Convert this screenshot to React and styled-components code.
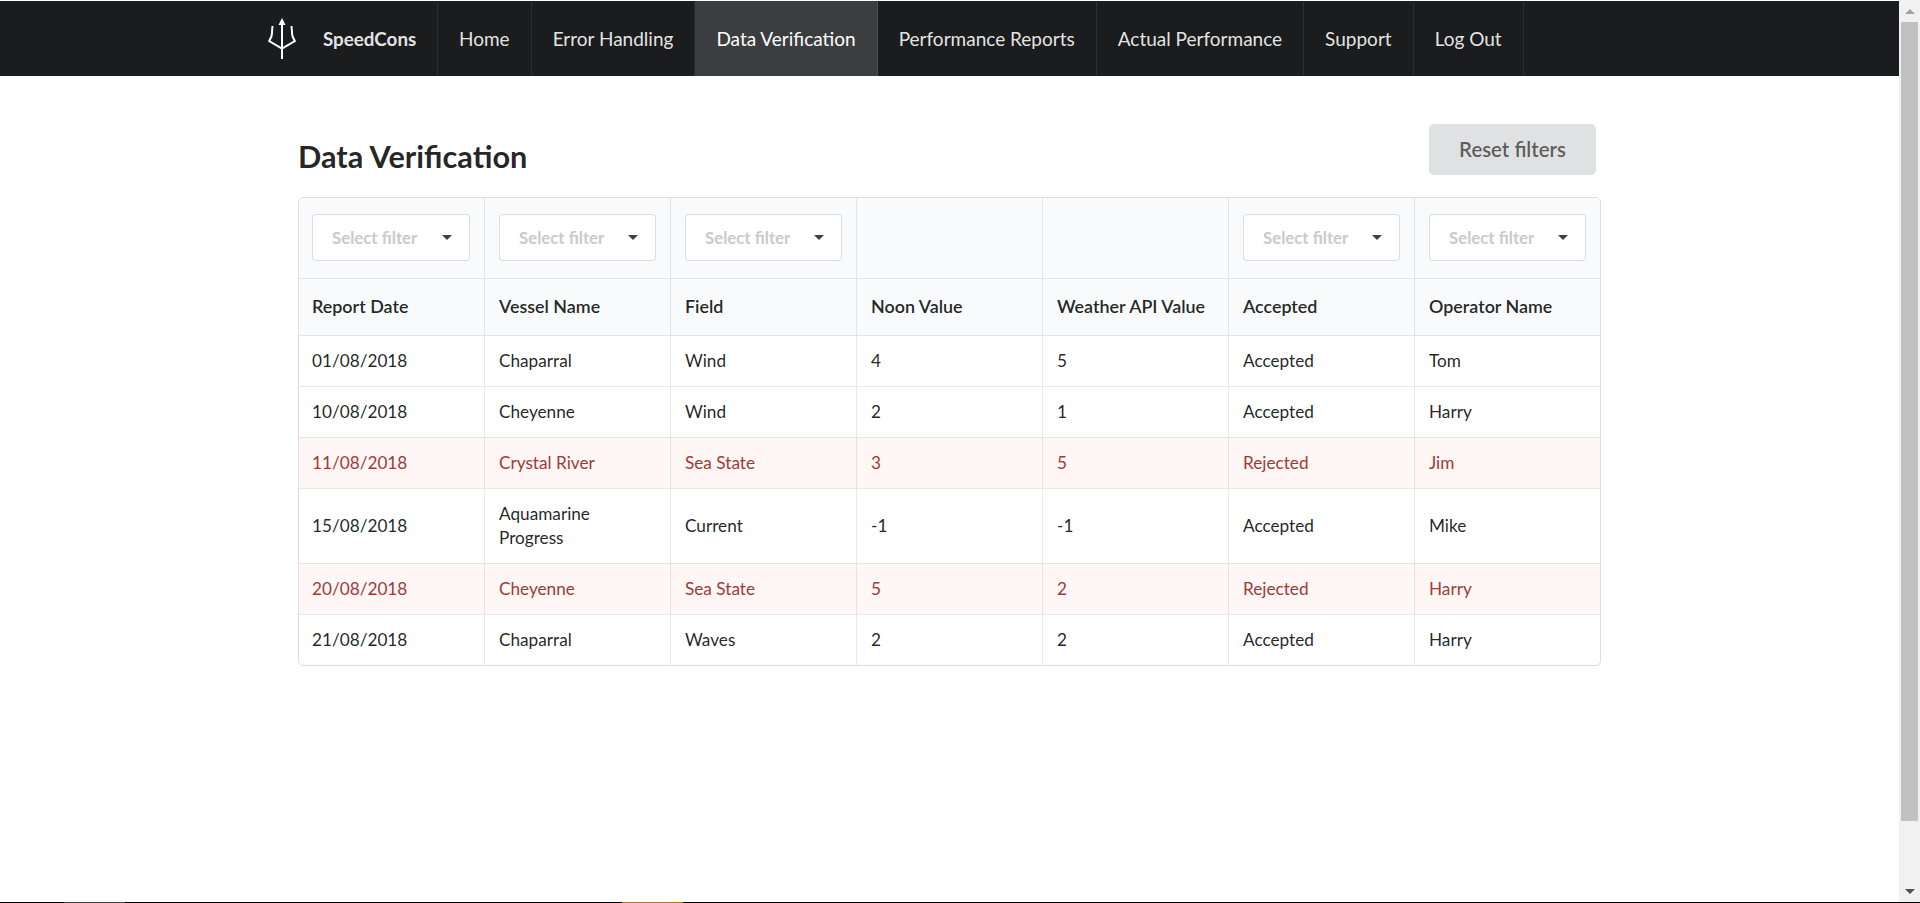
import React from 'react';
import styled, { createGlobalStyle } from 'styled-components';

const GlobalStyle = createGlobalStyle`
  html, body {
    margin: 0;
    height: 100%;
    overflow: hidden;
    background: #fff;
    font-family: Lato, "Open Sans", Arial, sans-serif;
    font-size: 17.2px;
    color: rgba(0, 0, 0, 0.87);
  }
  * {
    box-sizing: border-box;
  }
`;

const Screen = styled.div`
  height: 903px;
  display: flex;
  flex-direction: column;
`;

const Viewport = styled.div`
  flex: 1;
  display: flex;
  min-height: 0;
`;

const Page = styled.div`
  flex: 1;
  min-width: 0;
`;

const TopBar = styled.nav`
  height: 75px;
  margin-top: 1px;
  padding-left: 248px;
  display: flex;
  background: #1b1c1d;
`;

const Brand = styled.div`
  display: flex;
  align-items: center;
  gap: 27px;
  padding: 0 20px;
  width: 190px;
  font-weight: 700;
  font-size: 18.8px;
  color: rgba(255, 255, 255, 0.9);
  border-right: 1px solid rgba(255, 255, 255, 0.08);
`;

const NavItem = styled.a`
  display: flex;
  align-items: center;
  padding: 0 21px;
  font-size: 19px;
  color: ${props => (props.$active ? '#fff' : 'rgba(255, 255, 255, 0.9)')};
  background: ${props => (props.$active ? 'rgba(255, 255, 255, 0.15)' : 'transparent')};
  border-right: 1px solid rgba(255, 255, 255, 0.08);
`;

const Content = styled.main`
  width: 1303px;
  margin: 0 auto;
  padding-top: 48px;
`;

const TitleRow = styled.div`
  height: 73px;
  display: flex;
  align-items: flex-start;
  justify-content: space-between;
  padding-right: 5px;
`;

const Title = styled.h1`
  margin: 15px 0 0;
  font-size: 30.7px;
  line-height: 36px;
  font-weight: 700;
  color: rgba(0, 0, 0, 0.87);
`;

const ResetButton = styled.button`
  width: 167px;
  height: 51px;
  padding: 0 0 2px;
  border: none;
  border-radius: 5px;
  background: #e0e1e2;
  color: rgba(0, 0, 0, 0.6);
  font-family: inherit;
  font-size: 20.4px;
  font-weight: 600;
`;

const TableFrame = styled.div`
  border: 1px solid rgba(34, 36, 38, 0.15);
  border-radius: 5px;
  overflow: hidden;
`;

const Table = styled.table`
  width: 100%;
  table-layout: fixed;
  border-collapse: separate;
  border-spacing: 0;
`;

const FilterCell = styled.th`
  height: 81px;
  padding: 0 14px 1px;
  background: #f9fafb;
  border-bottom: 1px solid rgba(34, 36, 38, 0.1);
  border-left: 1px solid rgba(34, 36, 38, 0.1);
  &:first-child {
    width: 185px;
    border-left: none;
    padding-left: 13px;
  }
`;

const HeadCell = styled.th`
  height: 57px;
  padding: 0 14px 2px;
  background: #f9fafb;
  text-align: left;
  font-size: 17.9px;
  font-weight: 600;
  color: rgba(0, 0, 0, 0.87);
  border-bottom: 1px solid rgba(34, 36, 38, 0.1);
  border-left: 1px solid rgba(34, 36, 38, 0.1);
  white-space: nowrap;
  &:first-child {
    border-left: none;
    padding-left: 13px;
  }
`;

const Cell = styled.td`
  padding: 13px 14px;
  line-height: 24px;
  font-weight: 400;
  background: ${props => (props.$rejected ? '#fff6f6' : 'transparent')};
  color: ${props => (props.$rejected ? '#9f3a38' : 'rgba(0, 0, 0, 0.87)')};
  border-left: 1px solid rgba(34, 36, 38, 0.1);
  border-top: 1px solid rgba(34, 36, 38, 0.1);
  &:first-child {
    border-left: none;
    padding-left: 13px;
  }
  tr:first-child > & {
    border-top: none;
  }
`;

const FilterSelect = styled.div`
  width: 100%;
  height: 47px;
  display: flex;
  align-items: center;
  justify-content: space-between;
  padding: 0 17px 1px 19px;
  background: #fff;
  border: 1px solid rgba(34, 36, 38, 0.15);
  border-radius: 4px;
  font-size: 16.8px;
  font-weight: 700;
  white-space: nowrap;
  color: #cacaca;
`;

const Caret = styled.span`
  width: 0;
  height: 0;
  border-left: 5px solid transparent;
  border-right: 5px solid transparent;
  border-top: 5px solid rgba(0, 0, 0, 0.75);
`;

const Scrollbar = styled.div`
  width: 21px;
  display: flex;
  flex-direction: column;
  align-items: center;
  background: #f1f1f1;
`;

const ScrollArrow = styled.div`
  height: 22px;
  flex: none;
  display: flex;
  align-items: center;
  justify-content: center;
  &::after {
    content: '';
    border-left: 5px solid transparent;
    border-right: 5px solid transparent;
    border-bottom: ${props => (props.$up ? '5px solid #a3a3a3' : 'none')};
    border-top: ${props => (props.$up ? 'none' : '5px solid #505050')};
  }
`;

const ScrollThumb = styled.div`
  width: 17px;
  height: 799px;
  flex: none;
  background: #c1c1c1;
`;

const ScrollRest = styled.div`
  flex: 1;
`;

const TaskStrip = styled.div`
  height: 1px;
  flex: none;
  display: flex;
  background: #000;
`;

const TaskMark = styled.div`
  width: 61px;
  margin-left: ${props => props.$offset}px;
  background: ${props => props.$color};
`;

const Trident = () => (
  <svg width="28" height="41" viewBox="0 0 28 41" fill="none" stroke="#fff" strokeWidth="2">
    <path d="M14 6V41" />
    <path d="M14 0L10.5 7H17.5Z" fill="#fff" stroke="none" />
    <path d="M4.5 8L4 14Q4.5 18 1.2 23L14 30.5L26.8 23Q23.5 18 24 14L23.5 8" />
  </svg>
);

const navLinks = ['Home', 'Error Handling', 'Data Verification', 'Performance Reports', 'Actual Performance', 'Support', 'Log Out'];

const columns = ['Report Date', 'Vessel Name', 'Field', 'Noon Value', 'Weather API Value', 'Accepted', 'Operator Name'];

const filterColumns = [true, true, true, false, false, true, true];

const rows = [
  ['01/08/2018', 'Chaparral', 'Wind', '4', '5', 'Accepted', 'Tom'],
  ['10/08/2018', 'Cheyenne', 'Wind', '2', '1', 'Accepted', 'Harry'],
  ['11/08/2018', 'Crystal River', 'Sea State', '3', '5', 'Rejected', 'Jim'],
  ['15/08/2018', 'Aquamarine Progress', 'Current', '-1', '-1', 'Accepted', 'Mike'],
  ['20/08/2018', 'Cheyenne', 'Sea State', '5', '2', 'Rejected', 'Harry'],
  ['21/08/2018', 'Chaparral', 'Waves', '2', '2', 'Accepted', 'Harry'],
];

const App = () => (
  <Screen>
    <GlobalStyle />
    <Viewport>
      <Page>
        <TopBar>
          <Brand>
            <Trident />
            SpeedCons
          </Brand>
          {navLinks.map(link => (
            <NavItem key={link} $active={link === 'Data Verification'}>{link}</NavItem>
          ))}
        </TopBar>
        <Content>
          <TitleRow>
            <Title>Data Verification</Title>
            <ResetButton>Reset filters</ResetButton>
          </TitleRow>
          <TableFrame>
            <Table>
              <thead>
                <tr>
                  {filterColumns.map((hasFilter, i) => (
                    <FilterCell key={i}>
                      {hasFilter && (
                        <FilterSelect>
                          Select filter
                          <Caret />
                        </FilterSelect>
                      )}
                    </FilterCell>
                  ))}
                </tr>
                <tr>
                  {columns.map(col => <HeadCell key={col}>{col}</HeadCell>)}
                </tr>
              </thead>
              <tbody>
                {rows.map(row => (
                  <tr key={row.join()}>
                    {row.map((value, i) => (
                      <Cell key={i} $rejected={row[5] === 'Rejected'}>{value}</Cell>
                    ))}
                  </tr>
                ))}
              </tbody>
            </Table>
          </TableFrame>
        </Content>
      </Page>
      <Scrollbar>
        <ScrollArrow $up />
        <ScrollThumb />
        <ScrollRest />
        <ScrollArrow />
      </Scrollbar>
    </Viewport>
    <TaskStrip>
      <TaskMark $offset={64} $color="#444" />
      <TaskMark $offset={497} $color="#b8701f" />
    </TaskStrip>
  </Screen>
);

export default App;
